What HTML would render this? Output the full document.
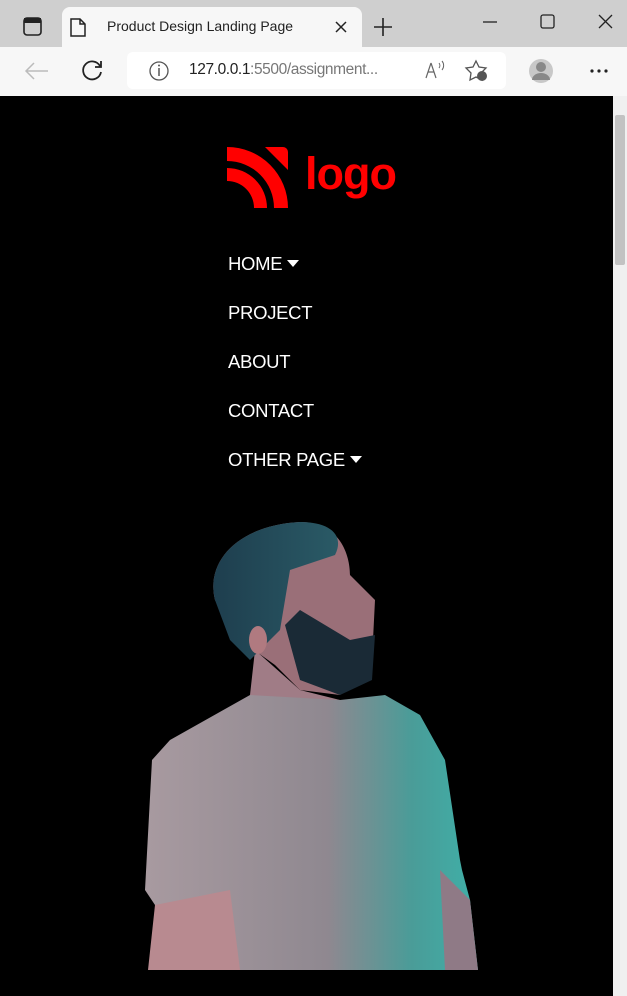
<!DOCTYPE html>
<html><head><meta charset="utf-8"><style>
*{margin:0;padding:0;box-sizing:border-box}
body{width:627px;height:996px;overflow:hidden;background:#000;font-family:"Liberation Sans",sans-serif;position:relative}
.chrome{position:absolute;left:0;top:0;width:627px;height:96px;background:#cfcfcf}
.toolbar{position:absolute;left:0;top:47px;width:627px;height:49px;background:#f7f7f7}
.tab{position:absolute;left:62px;top:7px;width:300px;height:42px;background:#f7f7f7;border-radius:8px 8px 0 0}
.t{position:absolute;font-size:14px;color:#222;white-space:nowrap}
.nav{position:absolute;left:228px;color:#fff;font-size:18.5px;white-space:nowrap;letter-spacing:-0.3px}
.tri{display:inline-block;width:0;height:0;border-left:6px solid transparent;border-right:6px solid transparent;border-top:7px solid #fff;margin-left:5px;vertical-align:3px}
</style></head><body>
<div class="chrome"></div>
<div class="tab"></div>
<div class="toolbar"></div>
<svg style="position:absolute;left:0;top:0" width="627" height="96">
<rect x="24" y="18" width="17" height="17" rx="3" fill="none" stroke="#222" stroke-width="1.6"/>
<rect x="24" y="18" width="17" height="5" fill="#222"/>
<path d="M71 19h9l5 5v12h-14z M80 19v5h5" fill="none" stroke="#222" stroke-width="1.5"/>
<path d="M336 22l10 10M346 22l-10 10" stroke="#222" stroke-width="1.5"/>
<path d="M374 27h18M383 18v18" stroke="#222" stroke-width="1.6"/>
<path d="M483 22h14" stroke="#222" stroke-width="1.3"/>
<rect x="541" y="15" width="13" height="13" rx="2" fill="none" stroke="#222" stroke-width="1.3"/>
<path d="M599 15l13 13M612 15l-13 13" stroke="#222" stroke-width="1.3"/>
<path d="M48 71H27M34 63l-8 8 8 8" fill="none" stroke="#bbb" stroke-width="1.5"/>
<path d="M100 66a9 9 0 1 0 1 6M101 61v6h-6" fill="none" stroke="#222" stroke-width="1.8"/>
<rect x="127" y="52" width="379" height="37" rx="6" fill="#fff"/>
<circle cx="159" cy="71" r="9" fill="none" stroke="#555" stroke-width="1.3"/>
<path d="M159 68v8" stroke="#555" stroke-width="1.5"/><circle cx="159" cy="65.5" r="1" fill="#555"/>
<path d="M431 63l-5 15M431 63l5 15M428 72h6" stroke="#666" stroke-width="1.2" fill="none"/>
<path d="M439 63a4 4 0 0 1 0 5M442 61a7 7 0 0 1 0 9" stroke="#666" stroke-width="1" fill="none"/>
<path d="M476 61l3 6 7 1-5 5 1 7-6-3-6 3 1-7-5-5 7-1z" fill="none" stroke="#555" stroke-width="1.3"/>
<circle cx="482" cy="76" r="5" fill="#555"/>
<circle cx="541" cy="71" r="12" fill="#c8c8c8"/><circle cx="541" cy="67" r="5" fill="#888"/><path d="M532 80a9 7 0 0 1 18 0z" fill="#888"/>
<circle cx="592" cy="71" r="1.6" fill="#222"/><circle cx="599" cy="71" r="1.6" fill="#222"/><circle cx="606" cy="71" r="1.6" fill="#222"/>
</svg>
<div class="t" style="left:107px;top:18px">Product Design Landing Page</div>
<div class="t" style="left:189px;top:61px;font-size:15.5px;letter-spacing:-0.4px;color:#222">127.0.0.1<span style="color:#777">:5500/assignment...</span></div>
<div style="position:absolute;left:613px;top:96px;width:14px;height:900px;background:#f0f0f0"></div>
<div style="position:absolute;left:615px;top:115px;width:10px;height:150px;background:#c2c2c2;border-radius:2px"></div>
<svg style="position:absolute;left:227px;top:147px" width="62" height="61" viewBox="0 0 62 61">
<path d="M0 0A61 61 0 0 1 61 61H47A47 47 0 0 0 0 14z" fill="#f00"/>
<path d="M0 21A40 40 0 0 1 40 61H27A27 27 0 0 0 0 34z" fill="#f00"/>
<path d="M38 0H56a5 5 0 0 1 5 5V23z" fill="#f00"/>
</svg>
<div style="position:absolute;left:305px;top:148px;color:#f00;font-size:45px;font-weight:bold;letter-spacing:-1px">logo</div>
<div class="nav" style="top:253px">HOME<span class="tri"></span></div>
<div class="nav" style="top:302px">PROJECT</div>
<div class="nav" style="top:351px">ABOUT</div>
<div class="nav" style="top:400px">CONTACT</div>
<div class="nav" style="top:449px">OTHER PAGE<span class="tri"></span></div>
<svg style="position:absolute;left:0;top:0" width="627" height="996">
<defs>
<linearGradient id="sh" x1="0" x2="1"><stop offset="0" stop-color="#a89aa0"/><stop offset=".55" stop-color="#8f8890"/><stop offset=".8" stop-color="#4a9c98"/><stop offset="1" stop-color="#3fb0a8"/></linearGradient>
<linearGradient id="hr" x1="0" x2="1"><stop offset="0" stop-color="#1e3e4e"/><stop offset="1" stop-color="#2a5a66"/></linearGradient>
</defs>
<path d="M160 970L155 905L145 890L152 760L170 740L250 695L270 690L340 700L385 695L420 715L445 760L460 860L462 870L470 900L478 970Z" fill="url(#sh)"/>
<path d="M155 905L148 970H240L230 890Z" fill="#b88a90"/>
<path d="M440 870L470 900L478 970H445Z" fill="#8f7a86"/>
<path d="M250 695L255 650L300 690L340 700Z" fill="#a07c86"/>
<path d="M215 600C205 560 240 525 300 522C340 522 350 555 350 575L375 600L372 660L340 695L300 690L275 665L240 640Z" fill="#9a6f78"/>
<path d="M215 600C205 560 240 525 300 522C330 522 345 535 335 555L290 570L280 630L250 660L230 640Z" fill="url(#hr)"/>
<path d="M285 625L300 610L350 640L375 635L372 680L340 695L300 680Z" fill="#1a2a36"/>
<ellipse cx="258" cy="640" rx="9" ry="14" fill="#b07a80"/>
</svg>
</body></html>
